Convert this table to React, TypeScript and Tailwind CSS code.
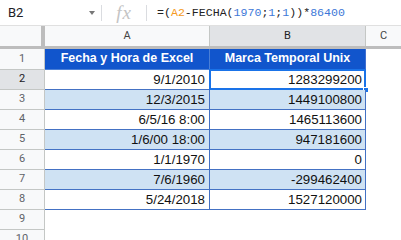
import React from "react";

const rows = [
  { a: "9/1/2010", b: "1283299200" },
  { a: "12/3/2015", b: "1449100800" },
  { a: "6/5/16 8:00", b: "1465113600" },
  { a: "1/6/00 18:00", b: "947181600" },
  { a: "1/1/1970", b: "0" },
  { a: "7/6/1960", b: "-299462400" },
  { a: "5/24/2018", b: "1527120000" },
];

const cellFont = { fontFamily: '"Liberation Sans", Arial, sans-serif' };
const uiFont = { fontFamily: "Roboto, Arial, sans-serif" };

const RowHead = ({ n, active }: { n: number; active?: boolean }) => (
  <div
    style={uiFont}
    className={`w-[45px] shrink-0 h-full flex items-center justify-center border-r border-b border-[#c4c7c5] text-[11px] ${
      active ? "bg-[#e1e3e6] text-[#202124]" : "bg-[#f8f9fa] text-[#5f6368]"
    }`}
  >
    {n}
  </div>
);

export default function App() {
  return (
    <div className="w-[401px] h-[240px] overflow-hidden bg-white flex flex-col">
      {/* Formula bar */}
      <div className="h-[26px] shrink-0 flex items-center border-b border-[#e0e0e0] bg-white">
        <div style={uiFont} className="w-[101px] h-full flex items-center justify-between pl-2 pr-[6px] text-[13px] text-[#202124]">
          <span>B2</span>
          <span className="w-0 h-0 border-l-[3.5px] border-r-[3.5px] border-t-[4px] border-l-transparent border-r-transparent border-t-[#777]" />
        </div>
        <div className="w-px h-[16px] bg-[#dadce0]" />
        <div className="w-[44px] h-full flex items-center justify-center">
          <span
            style={{ fontFamily: '"Liberation Serif", serif' }}
            className="italic text-[19px] leading-none text-[#c4c4c4] tracking-[1px]"
          >
            fx
          </span>
        </div>
        <div className="w-px h-[16px] bg-[#dadce0]" />
        <div
          style={{ fontFamily: '"Liberation Mono", "DejaVu Sans Mono", monospace' }}
          className="pl-[10px] text-[11.6px] text-[#222] whitespace-nowrap"
        >
          =(<span className="text-[#f59a23]">A2</span>-FECHA(
          <span className="text-[#3d78d8]">1970</span>;<span className="text-[#3d78d8]">1</span>;
          <span className="text-[#3d78d8]">1</span>))*<span className="text-[#3d78d8]">86400</span>
        </div>
      </div>

      {/* Column headers */}
      <div className="h-[23px] shrink-0 flex border-b-[3px] border-[#bdbdbd]" style={uiFont}>
        <div className="w-[45px] shrink-0 bg-[#f8f9fa] border-r-[4px] border-[#bdbdbd]" />
        <div className="w-[165px] shrink-0 bg-[#f8f9fa] border-r border-[#c4c7c5] flex items-center justify-center text-[11px] text-[#444]">
          A
        </div>
        <div className="w-[156px] shrink-0 bg-[#e1e3e6] border-r border-[#c4c7c5] flex items-center justify-center text-[11px] text-[#202124]">
          B
        </div>
        <div className="flex-1 bg-[#f8f9fa] flex items-center justify-center text-[11px] text-[#444]">C</div>
      </div>

      {/* Row 1: table header */}
      <div className="h-[21px] shrink-0 flex">
        <RowHead n={1} />
        <div
          style={cellFont}
          className="w-[165px] shrink-0 bg-[#1155cc] border-r border-b border-[#4a7fd6] flex items-end justify-center pb-[1px] text-[12.5px] font-bold text-white"
        >
          Fecha y Hora de Excel
        </div>
        <div
          style={cellFont}
          className="w-[156px] shrink-0 bg-[#1155cc] border-r border-b border-[#3f6fd0] flex items-end justify-center pb-[1px] text-[12.5px] font-bold text-white"
        >
          Marca Temporal Unix
        </div>
        <div className="flex-1" />
      </div>

      {rows.map((r, i) => {
        const shade = i % 2 === 1 ? "bg-[#cfe2f3]" : "bg-white";
        return (
          <div key={i} className="h-[20px] shrink-0 flex">
            <RowHead n={i + 2} active={i === 0} />
            <div
              style={cellFont}
              className={`w-[165px] shrink-0 ${shade} border-r border-b border-[#4472c4] flex items-end justify-end pr-[4px] text-[13.3px] leading-[18px] text-[#111]`}
            >
              {r.a}
            </div>
            <div
              style={cellFont}
              className={`relative w-[156px] shrink-0 ${shade} border-r border-b border-[#4472c4] flex items-end justify-end pr-[3px] text-[13.3px] leading-[18px] text-[#111]`}
            >
              {r.b}
              {i === 0 && (
                <>
                  <div className="absolute -left-[1px] -top-[1px] -right-[1px] -bottom-[1px] border-2 border-[#1a73e8]" />
                  <div className="absolute -right-[4px] -bottom-[4px] w-[6px] h-[6px] bg-[#1a73e8] border border-white" />
                </>
              )}
            </div>
            <div className="flex-1" />
          </div>
        );
      })}

      {[9, 10].map((n) => (
        <div key={n} className="h-[20px] shrink-0 flex">
          <RowHead n={n} />
          <div className="flex-1" />
        </div>
      ))}
    </div>
  );
}
